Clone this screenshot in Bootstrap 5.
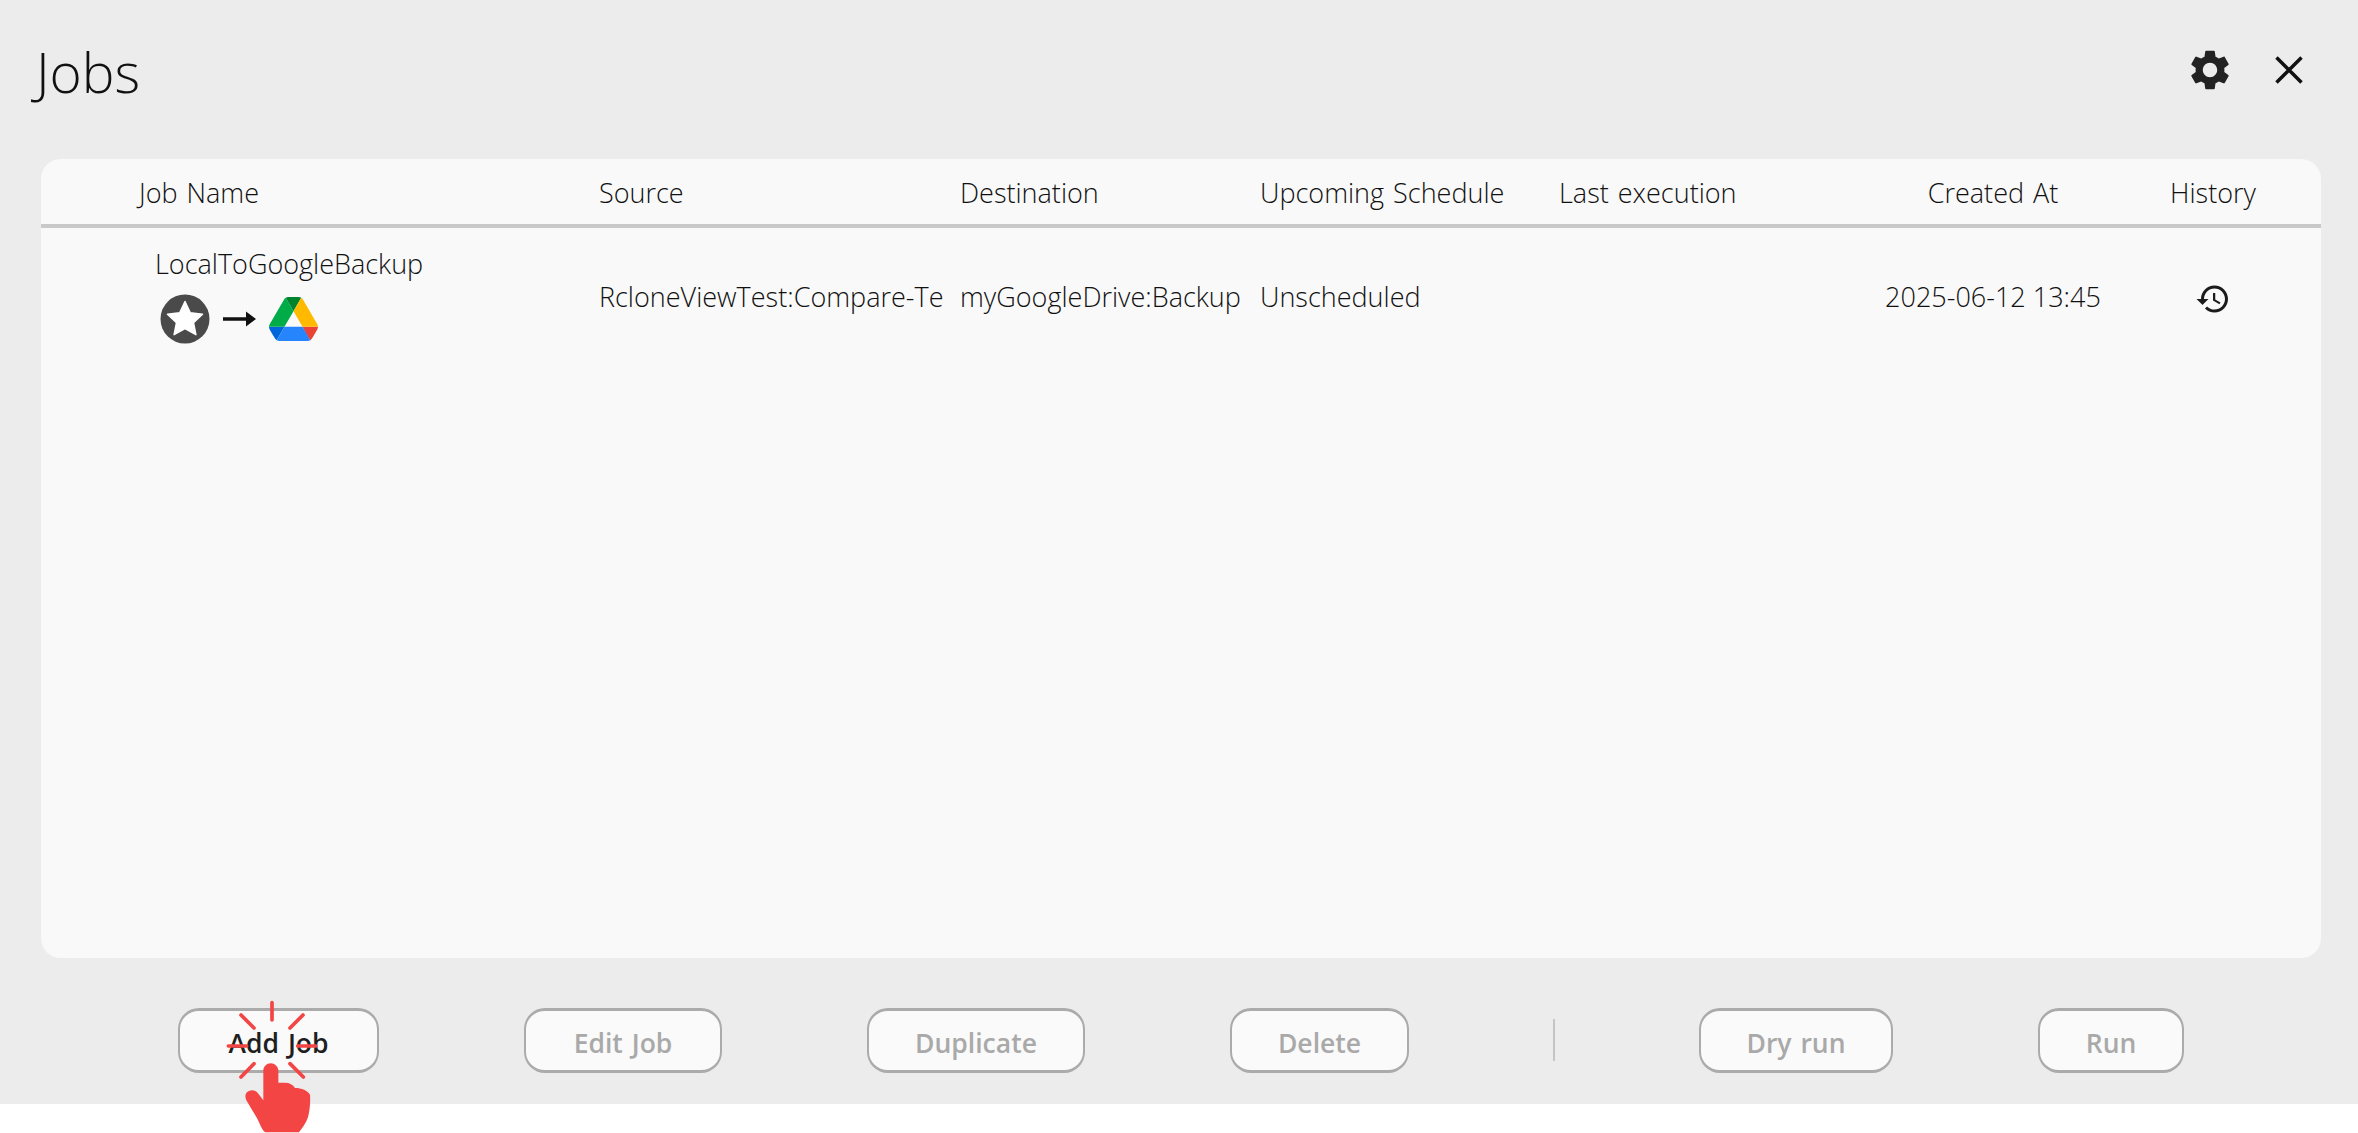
<!DOCTYPE html>
<html lang="en">
<head>
<meta charset="utf-8">
<title>Jobs</title>
<link href="https://cdn.jsdelivr.net/npm/bootstrap@5.3.0/dist/css/bootstrap.min.css" rel="stylesheet">
<style>
html,body{height:1133px;overflow:hidden;background:#fff}
body{font-family:"Open Sans","Noto Sans",sans-serif;color:#1c1c1c;position:relative}
.app-window{height:1104px;background:#ececec}
.title-row{height:159px;padding:0 55px 0 36px}
.app-title{font-size:55px;font-weight:300;line-height:1;margin:0 0 17px;color:#111}
.top-icons{gap:41px;margin-bottom:19px}
.jobs-panel{margin:0 37px 0 41px;height:799px;background:#f9f9f9;border:0;border-radius:20px;overflow:hidden}
.jobs-table{table-layout:fixed;width:100%;margin:0;font-size:27px;font-weight:300;--bs-table-bg:transparent;--bs-table-color:#111}
.jobs-table th{height:67px;font-weight:300;padding:4px 0 0;vertical-align:middle;border-bottom:4px solid #c9c9c9;word-spacing:2px}
.jobs-table td{height:140px;padding:0;vertical-align:middle;border:0}
.pad-head{padding-left:98px!important}
.pad-name{padding-left:114px!important}
.clip-cell{white-space:nowrap}
.name-line{line-height:34px;margin-top:-3px}
.flow-icons{margin:13px 0 0 5px;gap:13px}
.action-row{padding:50px 0 0 178px;gap:145px}
.action-btn{height:65px;font-size:26.500px;font-weight:600;line-height:1;background:#fafafa;border:2px solid #ababab;border-top-width:3px;border-bottom-width:3px;border-radius:21px;padding:5px 0 0;color:#a9a9a9;font-family:"Open Sans",sans-serif;white-space:nowrap;word-spacing:2px}
.action-btn:disabled{background:#fafafa;border-color:#ababab;color:#a9a9a9;opacity:1}
.btn-add{width:201px;color:#1f1f1f}
.btn-add:hover{background:#fafafa;border-color:#ababab;color:#1f1f1f}
.btn-edit{width:198px}
.btn-dup{width:218px}
.btn-del{width:179px}
.btn-dry{width:194px}
.btn-run{width:146px}
.split-bar{width:2px;height:42px;background:#c4c4c4;margin:11px -1px 0}
.click-hint{position:absolute;left:130px;top:960px;width:320px;height:173px;pointer-events:none}
</style>
</head>
<body>
<div class="app-window">
  <div class="title-row d-flex align-items-center justify-content-between">
    <h1 class="app-title">Jobs</h1>
    <div class="top-icons d-flex align-items-center">
      <svg width="48" height="48" viewBox="0 0 24 24" fill="#222"><path d="M19.14 12.94c.04-.3.06-.61.06-.94 0-.32-.02-.64-.07-.94l2.03-1.58c.18-.14.23-.41.12-.61l-1.92-3.32c-.12-.22-.37-.29-.59-.22l-2.39.96c-.5-.38-1.03-.7-1.62-.94l-.36-2.54c-.04-.24-.24-.41-.48-.41h-3.84c-.24 0-.43.17-.47.41l-.36 2.54c-.59.24-1.13.57-1.62.94l-2.39-.96c-.22-.08-.47 0-.59.22L2.74 8.87c-.12.21-.08.47.12.61l2.03 1.58c-.05.3-.09.63-.09.94s.02.64.07.94l-2.03 1.58c-.18.14-.23.41-.12.61l1.92 3.32c.12.22.37.29.59.22l2.39-.96c.5.38 1.03.7 1.62.94l.36 2.54c.05.24.24.41.48.41h3.84c.24 0 .44-.17.47-.41l.36-2.54c.59-.24 1.13-.56 1.62-.94l2.39.96c.22.08.47 0 .59-.22l1.92-3.32c.12-.22.07-.47-.12-.61l-2.01-1.58zM12 15.6c-1.98 0-3.6-1.62-3.6-3.6s1.62-3.6 3.6-3.6 3.6 1.62 3.6 3.6-1.62 3.6-3.6 3.6z"/></svg>
      <svg width="28" height="28" viewBox="0 0 28 28" stroke="#111" stroke-width="3.500" fill="none"><path d="M1.5 1.5l25 25M26.5 1.5l-25 25"/></svg>
    </div>
  </div>
  <div class="card jobs-panel">
    <table class="table jobs-table">
      <colgroup><col style="width:558px"><col style="width:361px"><col style="width:300px"><col style="width:299px"><col style="width:311px"><col style="width:246px"><col style="width:194px"><col></colgroup>
      <thead>
        <tr>
          <th class="pad-head">Job Name</th><th>Source</th><th>Destination</th><th>Upcoming Schedule</th><th>Last execution</th><th class="text-center">Created At</th><th class="text-center">History</th><th></th>
        </tr>
      </thead>
      <tbody>
        <tr>
          <td class="pad-name">
            <div class="name-line">LocalToGoogleBackup</div>
            <div class="flow-icons d-flex align-items-center">
              <svg width="50" height="50" viewBox="0 0 50 50"><circle cx="25" cy="25" r="24.500" fill="#4a4a4a"/><path d="M25 7.500l5.300 11.200 12.200 1.500-9 8.400 2.400 12.100L25 34.700l-10.900 6 2.400-12.100-9-8.400 12.200-1.500z" fill="#fff" stroke="#fff" stroke-width="1.500" stroke-linejoin="round"/></svg>
              <svg width="33" height="18" viewBox="0 0 33 18" fill="#111"><path d="M0 7.300h23V1.500l10 7.500-10 7.500v-5.800H0z"/></svg>
              <svg width="49" height="44" viewBox="0 0 87.300 78"><path d="m6.600 66.850 3.850 6.650c.8 1.400 1.950 2.500 3.300 3.300l13.750-23.800h-27.500c0 1.550.4 3.100 1.200 4.500z" fill="#0066da"/><path d="m43.650 25-13.750-23.800c-1.350.8-2.500 1.900-3.300 3.300l-25.400 44a9.060 9.060 0 0 0 -1.200 4.500h27.500z" fill="#00ac47"/><path d="m73.550 76.800c1.350-.8 2.500-1.900 3.300-3.300l1.600-2.750 7.650-13.250c.8-1.400 1.200-2.950 1.200-4.500h-27.502l5.852 11.500z" fill="#ea4335"/><path d="m43.650 25 13.750-23.800c-1.350-.8-2.900-1.200-4.500-1.200h-18.500c-1.600 0-3.150.45-4.500 1.200z" fill="#00832d"/><path d="m59.800 53h-32.300l-13.750 23.800c1.350.8 2.900 1.200 4.500 1.200h50.800c1.600 0 3.150-.45 4.500-1.200z" fill="#2684fc"/><path d="m73.400 26.500-12.700-22c-.8-1.400-1.950-2.500-3.300-3.300l-13.750 23.800 16.150 28h27.450c0-1.550-.4-3.100-1.200-4.500z" fill="#ffba00"/></svg>
            </div>
          </td>
          <td class="clip-cell">RcloneViewTest:Compare-Te</td>
          <td class="clip-cell">myGoogleDrive:Backup</td>
          <td>Unscheduled</td>
          <td></td>
          <td class="text-center">2025-06-12 13:45</td>
          <td class="text-center"><svg width="36" height="36" viewBox="0 0 24 24" fill="#1c1c1c"><path d="M13 3c-4.970 0-9 4.030-9 9H1l3.890 3.890.07.14L9 12H6c0-3.870 3.130-7 7-7s7 3.130 7 7-3.130 7-7 7c-1.930 0-3.680-.79-4.940-2.060l-1.420 1.420C8.270 19.990 10.510 21 13 21c4.970 0 9-4.030 9-9s-4.030-9-9-9zm-1 5v5l4.280 2.540.72-1.210-3.500-2.080V8H12z"/></svg></td>
          <td></td>
        </tr>
      </tbody>
    </table>
  </div>
  <div class="action-row d-flex align-items-start">
    <button type="button" class="btn action-btn btn-add">Add Job</button>
    <button type="button" class="btn action-btn btn-edit" disabled>Edit Job</button>
    <button type="button" class="btn action-btn btn-dup" disabled>Duplicate</button>
    <button type="button" class="btn action-btn btn-del" disabled>Delete</button>
    <div class="split-bar"></div>
    <button type="button" class="btn action-btn btn-dry" disabled>Dry run</button>
    <button type="button" class="btn action-btn btn-run" disabled>Run</button>
  </div>
</div>
<svg class="click-hint" viewBox="0 0 960 519">
  <g stroke="#f44545" stroke-width="11" stroke-linecap="round" fill="none">
    <path d="M426 128V180M333 165L372 204M519 165L480 204M295 258H350M503 258H558M372 311L333 351M480 311L520 351"/>
  </g>
  <path d="M400 332c0-12 10-22 22-22s23 10 23 22v36h20c14 0 24 6 30 16 20 0 38 8 45 20 2 20-1 50-6 68-6 18-18 32-27 45H405c-7-6-12-16-18-30-9-20-28-48-38-66-6-14-2-24 8-28 10-4 20-2 28 8l15 20z" fill="#f44545"/>
</svg>
</body>
</html>
